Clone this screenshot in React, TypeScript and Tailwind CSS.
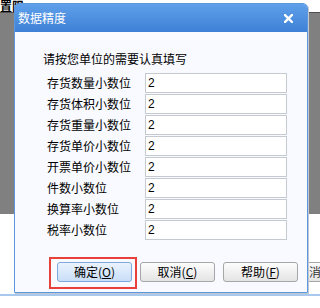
import React from "react";

const font = { fontFamily: '"Noto Sans CJK SC", "Liberation Sans", sans-serif' };

function Btn({ label, k, primary }: { label: string; k: string; primary?: boolean }) {
  return (
    <div
      className={
        "w-[75px] h-[20px] rounded-[3px] border flex items-center justify-center text-[12px] leading-none text-black " +
        (primary
          ? "border-[#7fa9dc] bg-gradient-to-b from-[#eaf3fe] to-[#c9def7]"
          : "border-[#a6a6a6] bg-gradient-to-b from-[#fdfdfd] to-[#e4e4e4]")
      }
    >
      <span>{label}(</span>
      <span className="underline">{k}</span>
      <span>)</span>
    </div>
  );
}

const rows = [
  "存货数量小数位",
  "存货体积小数位",
  "存货重量小数位",
  "存货单价小数位",
  "开票单价小数位",
  "件数小数位",
  "换算率小数位",
  "税率小数位",
];

export default function App() {
  return (
    <div className="relative w-[320px] h-[308px] overflow-hidden bg-white" style={font}>
      {/* background page */}
      <div className="flex flex-col h-full">
        <div className="h-[12px] text-[12px] leading-[12px] font-bold text-black whitespace-nowrap">置限</div>
        <div className="h-[1px] bg-[#505050]" />
        <div className="h-[201px] bg-[#808080]" />
        <div className="h-[48px]" />
        <div className="flex justify-end">
          <div className="w-[14px] h-[20px] border border-r-0 border-[#a6a6a6] rounded-l-[3px] bg-gradient-to-b from-[#fdfdfd] to-[#e4e4e4] overflow-hidden text-[12px] leading-[18px] pl-[2px] text-[#333]">
            消
          </div>
        </div>
        <div className="h-[12px]" />
        <div className="h-[2px] bg-[#a9c8ee]" />
      </div>

      {/* dialog */}
      <div className="absolute left-[14px] top-[3px] w-[294px] h-[290px] flex flex-col border border-[#5c97de] rounded-t-[5px] overflow-hidden shadow-[1px_1px_0_#c0c8d4]">
        <div className="h-[28px] bg-gradient-to-b from-[#5fa0ea] to-[#3e80d6] flex items-center justify-between pl-[3px] pr-[14px]">
          <span className="text-white text-[12px] leading-none">数据精度</span>
          <svg width="9" height="9" viewBox="0 0 9 9">
            <path d="M1 1L8 8M8 1L1 8" stroke="white" strokeWidth="2.4" strokeLinecap="square" />
          </svg>
        </div>
        <div className="flex-1 bg-[#f8faff] flex flex-col pl-[28px] pt-[20px]">
          <div className="text-[12px] leading-[14px] text-black">请按您单位的需要认真填写</div>
          <div className="mt-[7px] flex flex-col gap-[1px] pl-[4px]">
            {rows.map((r) => (
              <div key={r} className="flex items-center h-[20px]">
                <div className="w-[98px] text-[12px] leading-none text-black whitespace-nowrap">{r}</div>
                <div
                  className="w-[142px] h-[20px] border border-[#c5cad0] bg-white flex items-center pl-[2px] text-[12px] text-black"
                  style={{ fontFamily: '"Liberation Sans", sans-serif' }}
                >
                  2
                </div>
              </div>
            ))}
          </div>
          <div className="mt-[22px] flex gap-[8px] pl-[14px]">
            <Btn label="确定" k="O" primary />
            <Btn label="取消" k="C" />
            <Btn label="帮助" k="F" />
          </div>
        </div>
      </div>

      {/* red highlight */}
      <div className="absolute left-[49px] top-[257px] w-[88px] h-[32px] border-2 border-[#e8403a]" />
    </div>
  );
}
